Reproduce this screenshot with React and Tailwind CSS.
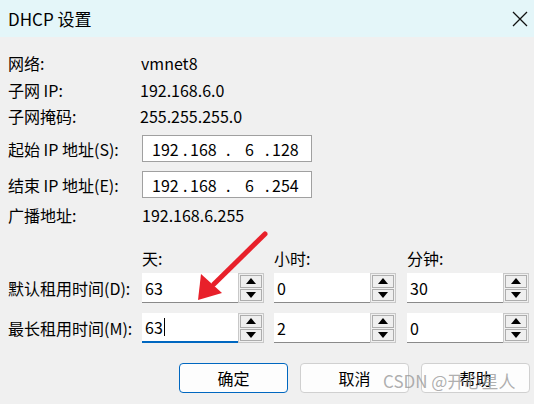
import React from "react";

const font = { fontFamily: '"Noto Sans CJK SC","Noto Sans",sans-serif' };

function Spin() {
  return (
    <div className="flex flex-col w-[26px] h-[30px] border border-[#c8c8c8] p-[1px] gap-[1px]">
      <div className="flex-1 flex items-center justify-center border border-[#adadad] bg-[#efefef]">
        <svg width="10" height="6" viewBox="0 0 10 6"><path d="M0 6 L5 0 L10 6 Z" fill="#000" /></svg>
      </div>
      <div className="flex-1 flex items-center justify-center border border-[#adadad] bg-[#efefef]">
        <svg width="10" height="6" viewBox="0 0 10 6"><path d="M0 0 L10 0 L5 6 Z" fill="#000" /></svg>
      </div>
    </div>
  );
}

function SpinField({ value, active, caret }) {
  return (
    <div className="flex items-stretch h-[30px]">
      <div
        className={
          "w-[96px] bg-white flex items-center pl-[3px] text-[16px] text-black " +
          (active ? "border-b-2 border-[#0067c0]" : "border-b border-[#8a8a8a]")
        }
      >
        <span>{value}</span>
        {caret && <span className="w-[1px] h-[18px] bg-black ml-[1px]" />}
      </div>
      <Spin />
    </div>
  );
}

function IpBox({ parts }) {
  return (
    <div className="w-[170px] h-[27px] bg-white border border-[#a0a0a0] flex items-center text-[16px] text-black relative">
      <span className="absolute left-[9px]">{parts[0]}</span>
      <span className="absolute left-[40px]">.</span>
      <span className="absolute left-[47px]">{parts[1]}</span>
      <span className="absolute left-[83px]">.</span>
      <span className="absolute left-[102px]">{parts[2]}</span>
      <span className="absolute left-[122px]">.</span>
      <span className="absolute left-[129px]">{parts[3]}</span>
    </div>
  );
}

export default function App() {
  return (
    <div className="w-[534px] h-[404px] bg-[#f0f0f0] relative overflow-hidden text-black" style={font}>
      {/* title bar */}
      <div className="h-[37px] bg-[#e4f6f9] flex items-center justify-between pl-[8px] pr-[6px]">
        <span className="text-[17px]">DHCP 设置</span>
        <svg width="16" height="16" viewBox="0 0 16 16">
          <path d="M1 1 L15 15 M15 1 L1 15" stroke="#111" strokeWidth="1.3" />
        </svg>
      </div>

      <div className="pl-[8px] pt-[13px] text-[16px]">
        <div className="flex items-center h-[26px]">
          <span className="w-[133px]">网络:</span>
          <span>vmnet8</span>
        </div>
        <div className="flex items-center h-[27px]">
          <span className="w-[132px]">子网 IP:</span>
          <span>192.168.6.0</span>
        </div>
        <div className="flex items-center h-[26px]">
          <span className="w-[132px]">子网掩码:</span>
          <span>255.255.255.0</span>
        </div>
        <div className="flex items-center h-[27px] mt-[6px]">
          <span className="w-[134px]">起始 IP 地址(S):</span>
          <IpBox parts={["192", "168", "6", "128"]} />
        </div>
        <div className="flex items-center h-[27px] mt-[9px]">
          <span className="w-[134px]">结束 IP 地址(E):</span>
          <IpBox parts={["192", "168", "6", "254"]} />
        </div>
        <div className="flex items-center h-[26px] mt-[4px]">
          <span className="w-[134px]">广播地址:</span>
          <span>192.168.6.255</span>
        </div>

        <div className="flex items-center h-[20px] mt-[20px]">
          <span className="w-[134px]" />
          <span className="w-[132px]">天:</span>
          <span className="w-[133px]">小时:</span>
          <span>分钟:</span>
        </div>
        <div className="flex items-center h-[30px] mt-[5px]">
          <span className="w-[134px]">默认租用时间(D):</span>
          <div className="flex gap-[10px]">
            <SpinField value="63" />
            <SpinField value="0" />
            <div className="ml-[1px]"><SpinField value="30" /></div>
          </div>
        </div>
        <div className="flex items-center h-[30px] mt-[10px]">
          <span className="w-[134px]">最长租用时间(M):</span>
          <div className="flex gap-[10px]">
            <SpinField value="63" active caret />
            <SpinField value="2" />
            <div className="ml-[1px]"><SpinField value="0" /></div>
          </div>
        </div>

        <div className="flex mt-[20px] pl-[171px] gap-[12px]">
          <button className="w-[109px] h-[30px] rounded-[4px] border border-[#0067c0] bg-[#fdfdfd] text-[16px]">确定</button>
          <button className="w-[109px] h-[30px] rounded-[4px] border border-[#d0d0d0] bg-[#fdfdfd] text-[16px]">取消</button>
          <button className="w-[109px] h-[30px] rounded-[4px] border border-[#d0d0d0] bg-[#fdfdfd] text-[16px]">帮助</button>
        </div>
      </div>

      {/* red arrow annotation */}
      <svg className="absolute left-0 top-0 pointer-events-none" width="534" height="404" viewBox="0 0 534 404">
        <line x1="265" y1="234" x2="214" y2="284" stroke="#e8202a" strokeWidth="5" strokeLinecap="round" />
        <path d="M198 300 L201 274 L222 293 Z" fill="#e8202a" />
      </svg>

      {/* watermark */}
      <div className="absolute left-[383px] top-[372px] text-[17px] text-[#9a9a9a]/80 leading-none">
        CSDN @开心星人
      </div>
    </div>
  );
}
